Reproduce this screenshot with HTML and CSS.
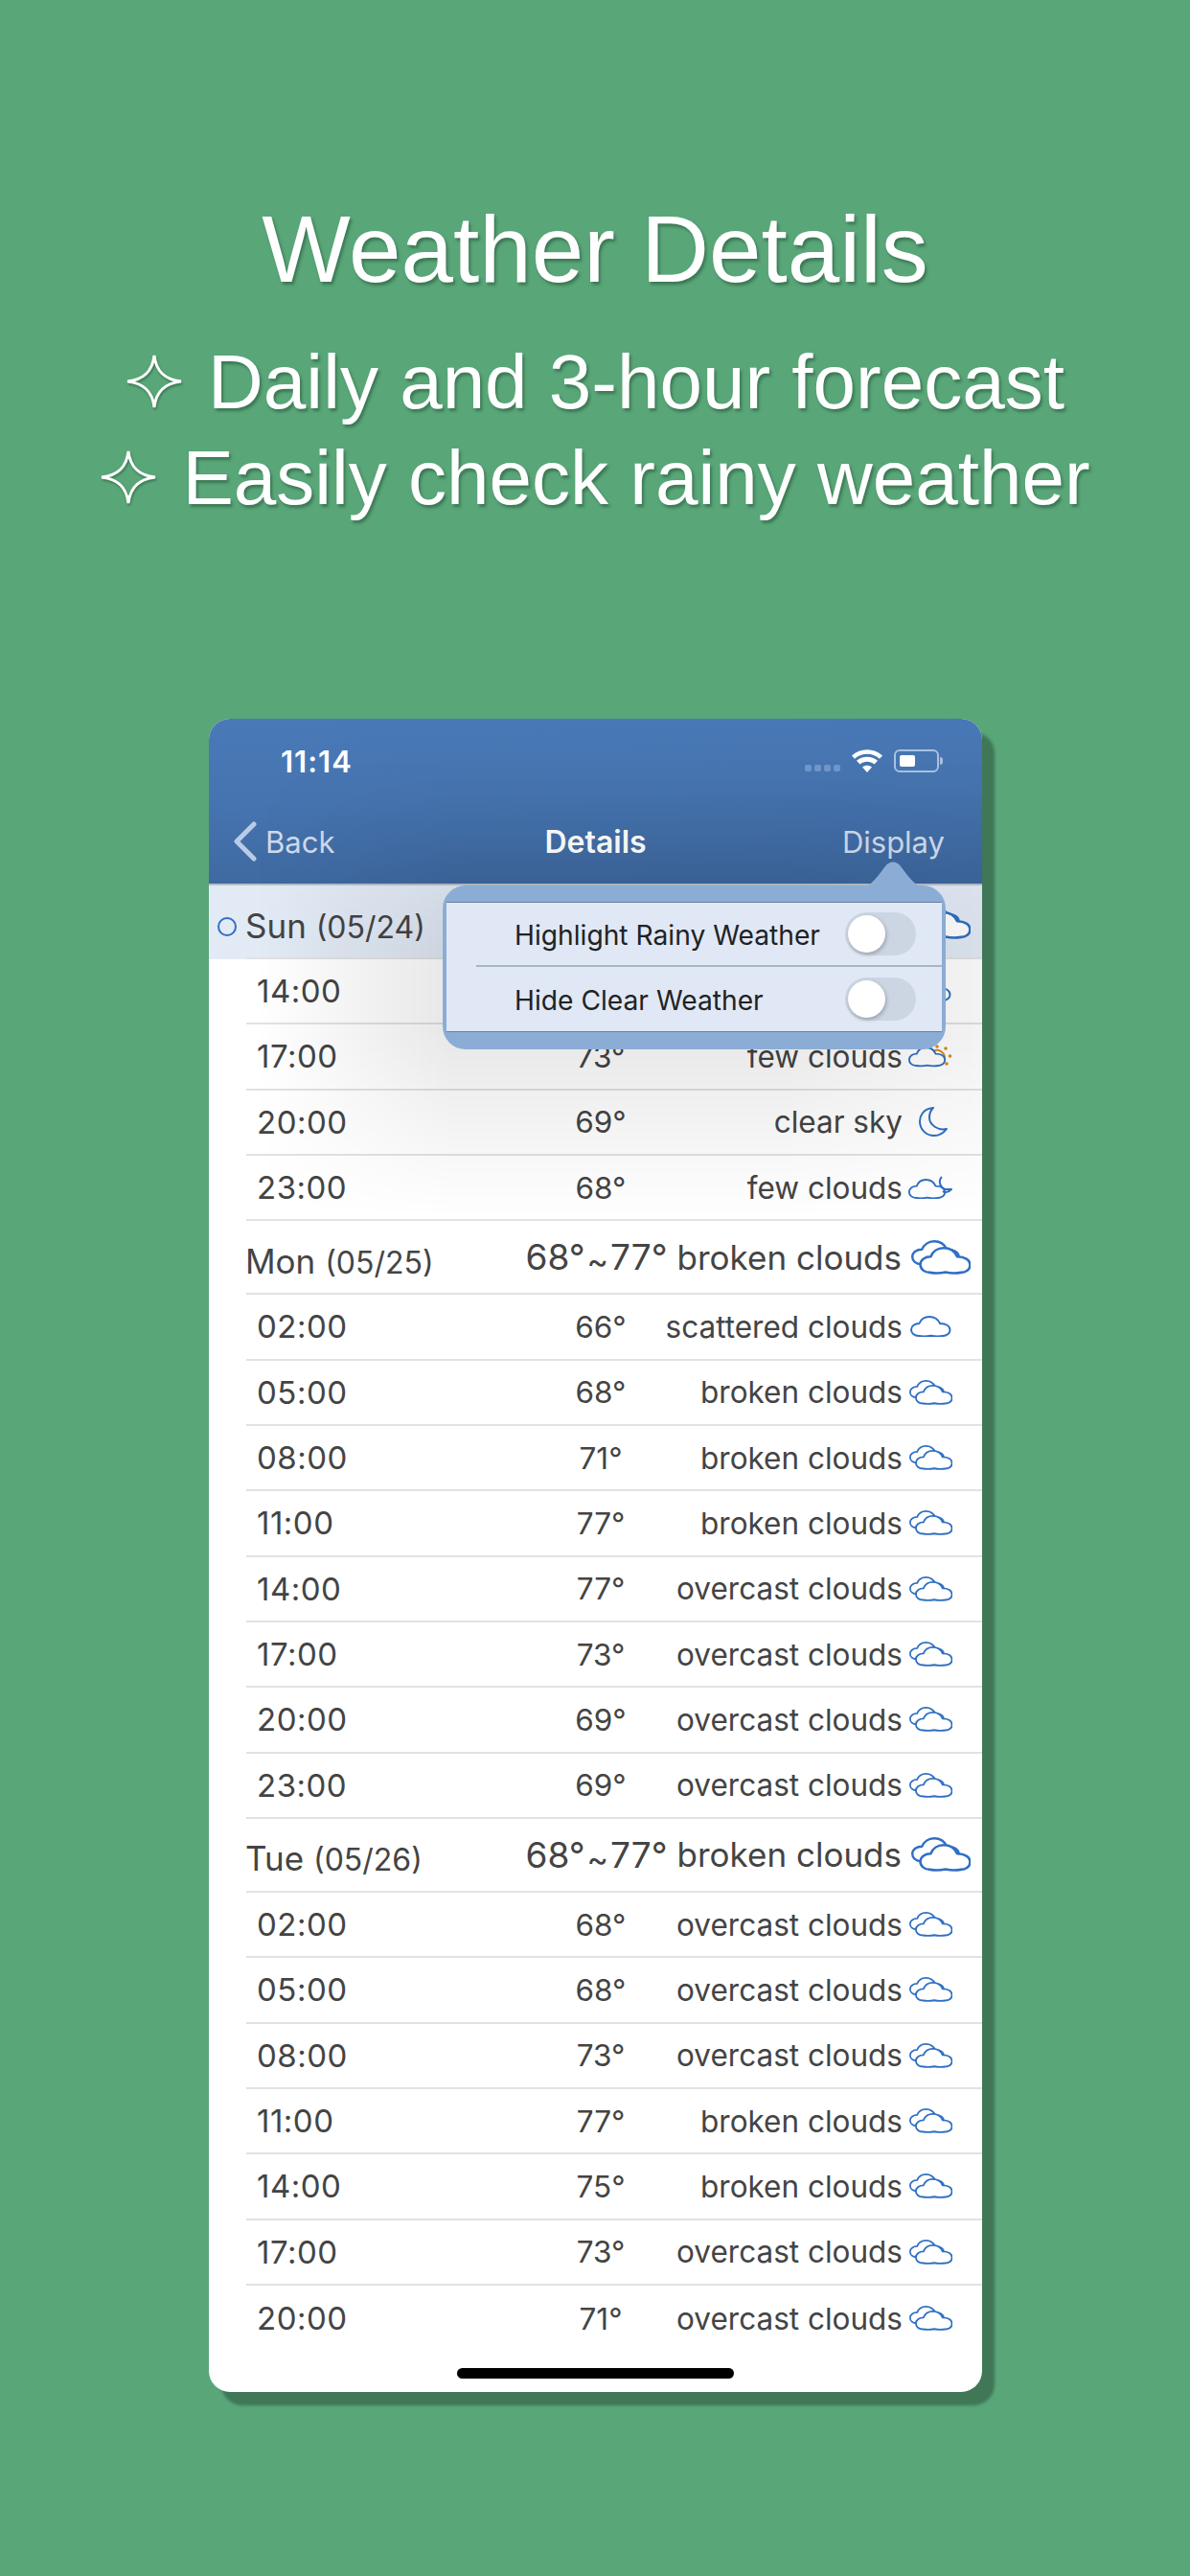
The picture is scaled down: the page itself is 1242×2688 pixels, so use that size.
FILE: index.html
```html
<!DOCTYPE html>
<html lang="en">
<head>
<meta charset="utf-8">
<title>Weather Details</title>
<link rel="stylesheet" href="styles.css">
</head>
<body>
<svg class="defs" width="0" height="0" aria-hidden="true">
  <defs>
    <path id="cloud-path" d="M9 21C4 21 1 18 1 14.5 1 10.5 5 8 9.5 8 11 4 15 1 20 1 25 1 29 3.5 31 8 37 8 41.5 10.5 41.5 15 41.5 18.5 38 21 34 21 30 21.6 26 21.6 21.5 20.7 17 21.6 13 21.6 9 21Z"/>
    <symbol id="scattered" viewBox="0 0 43 22"><use href="#cloud-path" class="ln"/></symbol>
    <symbol id="broken" viewBox="0 0 45 26">
      <use href="#cloud-path" class="ln" transform="translate(0 0) scale(.87 .87)"/>
      <use href="#cloud-path" class="ln fw" transform="translate(6 5) scale(.93 .93)"/>
    </symbol>
    <symbol id="fewsun" viewBox="0 0 46 24">
      <path class="sun" d="M26 7A8 8 0 0 1 38 14"/>
      <g class="rays"><circle cx="30" cy="2" r="1.8"/><circle cx="39" cy="4" r="1.8"/><circle cx="43.500" cy="12" r="1.8"/><circle cx="40" cy="20" r="1.8"/></g>
      <use href="#cloud-path" class="ln" transform="translate(0 2) scale(.92 .95)"/>
    </symbol>
    <symbol id="fewmoon" viewBox="0 0 46 24">
      <path class="ln" d="M35 1C31 5 33 12 38 14L45 14C42 17 38 18 36 16"/>
      <use href="#cloud-path" class="ln" transform="translate(0 3) scale(.92 .95)"/>
    </symbol>
    <symbol id="moon" viewBox="0 0 30 31">
      <path class="ln" d="M15 1C4 2 1 10 1 15 1 24 8 30 16 30 22 30 26 27 29 23 20 25 11 19 11 11 11 7 12 4 15 1Z"/>
    </symbol>
  </defs>
</svg>

<header class="hero">
  <h1 class="hero-title">Weather Details</h1>
  <p class="hero-line">
    <svg class="star" viewBox="0 0 60 58"><path d="M30 2C32 19 41 27 58 29 41 31 32 39 30 56 28 39 19 31 2 29 19 27 28 19 30 2Z"/></svg>
    <span>Daily and 3-hour forecast</span>
  </p>
  <p class="hero-line">
    <svg class="star" viewBox="0 0 60 58"><path d="M30 2C32 19 41 27 58 29 41 31 32 39 30 56 28 39 19 31 2 29 19 27 28 19 30 2Z"/></svg>
    <span>Easily check rainy weather</span>
  </p>
</header>

<main class="phone">
  <div class="topbar">
    <div class="status">
      <span class="clock">11:14</span>
      <div class="status-icons">
        <span class="signal"><i></i><i></i><i></i><i></i></span>
        <svg class="wifi" viewBox="0 0 32 24"><path d="M16 24L11 18.500C14 16 18 16 21 18.500ZM8.500 15.500L5 11.800C11 6.500 21 6.500 27 11.800L23.500 15.500C19 11.800 13 11.800 8.500 15.500ZM3 9.700L0 6.500C9 -2 23 -2 32 6.500L29 9.700C21.500 3 10.500 3 3 9.700Z"/></svg>
        <span class="battery"><i class="battery-level"></i></span>
      </div>
    </div>
    <nav class="nav">
      <span class="back">
        <svg class="chevron" viewBox="0 0 26 42"><path d="M22 3L4 21 22 39"/></svg>
        Back
      </span>
      <strong class="nav-title">Details</strong>
      <span class="display">Display</span>
    </nav>
  </div>

  <section class="list">
    <div class="day today">
      <span class="today-dot"></span>
      <div class="day-inner">
        <span class="date">Sun <small>(05/24)</small></span>
        <span class="ico"><svg class="big"><use href="#broken"/></svg></span>
      </div>
    </div>
    <div class="row"><span class="time">14:00</span><span class="temp"></span><span class="desc"></span><span class="ico"><svg class="s"><use href="#scattered"/></svg></span></div>
    <div class="row"><span class="time">17:00</span><span class="temp">73°</span><span class="desc">few clouds</span><span class="ico"><svg class="f"><use href="#fewsun"/></svg></span></div>
    <div class="row"><span class="time">20:00</span><span class="temp">69°</span><span class="desc">clear sky</span><span class="ico"><svg class="m"><use href="#moon"/></svg></span></div>
    <div class="row"><span class="time">23:00</span><span class="temp">68°</span><span class="desc">few clouds</span><span class="ico"><svg class="f"><use href="#fewmoon"/></svg></span></div>

    <div class="day">
      <div class="day-inner">
        <span class="date">Mon <small>(05/25)</small></span>
        <span class="range">68°<small>~</small>77°</span>
        <span class="desc">broken clouds</span>
        <span class="ico"><svg class="big"><use href="#broken"/></svg></span>
      </div>
    </div>
    <div class="row"><span class="time">02:00</span><span class="temp">66°</span><span class="desc">scattered clouds</span><span class="ico"><svg class="s"><use href="#scattered"/></svg></span></div>
    <div class="row"><span class="time">05:00</span><span class="temp">68°</span><span class="desc">broken clouds</span><span class="ico"><svg class="b"><use href="#broken"/></svg></span></div>
    <div class="row"><span class="time">08:00</span><span class="temp">71°</span><span class="desc">broken clouds</span><span class="ico"><svg class="b"><use href="#broken"/></svg></span></div>
    <div class="row"><span class="time">11:00</span><span class="temp">77°</span><span class="desc">broken clouds</span><span class="ico"><svg class="b"><use href="#broken"/></svg></span></div>
    <div class="row"><span class="time">14:00</span><span class="temp">77°</span><span class="desc">overcast clouds</span><span class="ico"><svg class="b"><use href="#broken"/></svg></span></div>
    <div class="row"><span class="time">17:00</span><span class="temp">73°</span><span class="desc">overcast clouds</span><span class="ico"><svg class="b"><use href="#broken"/></svg></span></div>
    <div class="row"><span class="time">20:00</span><span class="temp">69°</span><span class="desc">overcast clouds</span><span class="ico"><svg class="b"><use href="#broken"/></svg></span></div>
    <div class="row"><span class="time">23:00</span><span class="temp">69°</span><span class="desc">overcast clouds</span><span class="ico"><svg class="b"><use href="#broken"/></svg></span></div>

    <div class="day">
      <div class="day-inner">
        <span class="date">Tue <small>(05/26)</small></span>
        <span class="range">68°<small>~</small>77°</span>
        <span class="desc">broken clouds</span>
        <span class="ico"><svg class="big"><use href="#broken"/></svg></span>
      </div>
    </div>
    <div class="row"><span class="time">02:00</span><span class="temp">68°</span><span class="desc">overcast clouds</span><span class="ico"><svg class="b"><use href="#broken"/></svg></span></div>
    <div class="row"><span class="time">05:00</span><span class="temp">68°</span><span class="desc">overcast clouds</span><span class="ico"><svg class="b"><use href="#broken"/></svg></span></div>
    <div class="row"><span class="time">08:00</span><span class="temp">73°</span><span class="desc">overcast clouds</span><span class="ico"><svg class="b"><use href="#broken"/></svg></span></div>
    <div class="row"><span class="time">11:00</span><span class="temp">77°</span><span class="desc">broken clouds</span><span class="ico"><svg class="b"><use href="#broken"/></svg></span></div>
    <div class="row"><span class="time">14:00</span><span class="temp">75°</span><span class="desc">broken clouds</span><span class="ico"><svg class="b"><use href="#broken"/></svg></span></div>
    <div class="row"><span class="time">17:00</span><span class="temp">73°</span><span class="desc">overcast clouds</span><span class="ico"><svg class="b"><use href="#broken"/></svg></span></div>
    <div class="row last"><span class="time">20:00</span><span class="temp">71°</span><span class="desc">overcast clouds</span><span class="ico"><svg class="b"><use href="#broken"/></svg></span></div>
  </section>

  <div class="home-bar"></div>
  <div class="halo"></div>

  <div class="popover">
    <svg class="pointer" viewBox="0 0 64 28"><path d="M0 28C8 26 12 22 24 6 28 0 36 0 40 6 52 22 56 26 64 28Z"/></svg>
    <div class="pop-body">
      <div class="pop-row">
        <span class="pop-label">Highlight Rainy Weather</span>
        <span class="toggle"><i class="knob"></i></span>
      </div>
      <div class="pop-row">
        <span class="pop-label">Hide Clear Weather</span>
        <span class="toggle"><i class="knob"></i></span>
      </div>
    </div>
  </div>
</main>
</body>
</html>
```

FILE: styles.css
```css
* { box-sizing: border-box; }

html, body { margin: 0; padding: 0; }

body {
  width: 1242px;
  height: 2688px;
  background: #59a678;
  font-family: Inter, "Liberation Sans", sans-serif;
  overflow: hidden;
}

.defs { position: absolute; }

/* hero */
.hero {
  height: 750px;
  padding-top: 202px;
  display: flex;
  flex-direction: column;
  align-items: center;
  color: #fff;
  font-family: "Liberation Sans", Arial, sans-serif;
  text-shadow: 2px 3px 3px rgba(40, 90, 60, .6);
}

.hero-title {
  margin: 0 0 31px;
  font-size: 98px;
  line-height: 116px;
  font-weight: 400;
}

.hero-line {
  margin: 0;
  display: flex;
  align-items: center;
  gap: 26px;
  font-size: 80px;
  line-height: 100px;
  height: 100px;
}

.star {
  width: 60px;
  height: 58px;
  margin-top: -2px;
  fill: none;
  stroke: #fff;
  stroke-width: 3;
  filter: drop-shadow(1px 2px 1px rgba(40, 90, 60, .6));
}

/* phone card */
.phone {
  position: relative;
  width: 807px;
  height: 1746px;
  margin-left: 218px;
  background: #fff;
  border-radius: 22px;
  box-shadow: 13px 14px 3px #3f7757;
}

.topbar {
  height: 174px;
  border-radius: 22px 22px 0 0;
  background: linear-gradient(178deg, #4979b8 0%, #4674b0 45%, #3c669c 100%);
  border-bottom: 2px solid #b9c0ca;
  color: #fff;
}

.status {
  height: 88px;
  padding: 0 45px 0 75px;
  display: flex;
  justify-content: space-between;
  align-items: center;
}

.clock {
  font-size: 31px;
  font-weight: 600;
  letter-spacing: 1px;
}

.status-icons {
  display: flex;
  align-items: center;
}

.signal {
  display: flex;
  gap: 3px;
  margin: 14px 12px 0 0;
}

.signal i {
  width: 7px;
  height: 7px;
  border-radius: 2px;
  background: #7097ca;
}

.wifi {
  width: 32px;
  height: 24px;
  fill: #fff;
  margin-right: 12px;
}

.battery {
  position: relative;
  width: 47px;
  height: 24px;
  padding: 4px;
  border: 2px solid #a9c1e0;
  border-radius: 6px;
}

.battery::after {
  content: "";
  position: absolute;
  right: -6px;
  top: 6px;
  width: 3px;
  height: 8px;
  border-radius: 0 3px 3px 0;
  background: #a9c1e0;
}

.battery-level {
  display: block;
  width: 16px;
  height: 100%;
  border-radius: 2px;
  background: #fff;
}

.nav {
  height: 84px;
  padding: 0 39px 4px 39px;
  display: grid;
  grid-template-columns: 1fr auto 1fr;
  align-items: center;
  font-size: 31px;
}

.back {
  display: flex;
  align-items: center;
  gap: 8px;
  margin-left: -14px;
  color: #cfdbec;
}

.chevron {
  width: 26px;
  height: 42px;
  fill: none;
  stroke: #b9cce6;
  stroke-width: 5;
  stroke-linecap: round;
  stroke-linejoin: round;
}

.nav-title {
  font-weight: 600;
  font-size: 32px;
}

.display {
  justify-self: end;
  color: #cfdbec;
}

/* list */
.list {
  color: #444;
  font-size: 31.5px;
}

.row {
  height: 68.33px;
  margin-left: 39px;
  padding-left: 10px;
  display: grid;
  grid-template-columns: 310px 100px 265px 77px;
  align-items: center;
  border-bottom: 2px solid #e2e2e2;
}

.row.last { border-bottom: 0; }

.time {
  margin-left: 1px;
  font-size: 33px;
  letter-spacing: .5px;
}

.temp { text-align: center; }

.row .desc { text-align: right; }

.ico {
  width: 46px;
  margin-left: 6px;
  display: flex;
  justify-content: center;
  align-items: center;
}

.ico svg { flex: none; display: block; }

.ico .s { width: 43px; height: 22px; }
.ico .b { width: 45px; height: 26px; }
.ico .f { width: 46px; height: 24px; }
.ico .m { width: 30px; height: 31px; margin-left: 6px; }

.ln {
  fill: none;
  stroke: #2f6fc4;
  stroke-width: 2;
  stroke-linejoin: round;
}

.fw { fill: #fff; }

.sun {
  fill: none;
  stroke: #d98a1d;
  stroke-width: 2;
}

.rays { fill: #d98a1d; }

.day {
  height: 77px;
  padding-left: 39px;
}

.day-inner {
  height: 100%;
  display: flex;
  align-items: center;
  border-bottom: 2px solid #e2e2e2;
}

.today {
  position: relative;
  background: #e2eaf6;
}

.today-dot {
  position: absolute;
  left: 9px;
  top: 33px;
  width: 20px;
  height: 20px;
  border: 2px solid #2f6fc4;
  border-radius: 50%;
}

.date {
  flex: 1;
  margin-left: -1px;
  padding-top: 8px;
  font-size: 35px;
}

.date small { font-size: 32px; }

.range {
  margin-right: 10px;
  font-size: 37px;
  white-space: nowrap;
}

.range small {
  display: inline-block;
  margin: 0 2px;
  font-size: 34px;
  transform: translateY(3px);
}

.day .desc { font-size: 35px; }

.day .ico {
  width: 77px;
  margin-left: 7px;
  justify-content: flex-start;
}

.day .ico .big {
  width: 62px;
  height: 36px;
  margin-left: 3px;
}

.home-bar {
  position: absolute;
  left: 259px;
  bottom: 14px;
  width: 289px;
  height: 11px;
  border-radius: 6px;
  background: #000;
}

.halo {
  position: absolute;
  left: 0;
  top: 40px;
  width: 807px;
  height: 480px;
  background: linear-gradient(90deg, rgba(0, 0, 0, 0) 50px, rgba(0, 0, 0, .09) 250px, rgba(0, 0, 0, .09) 600px, rgba(0, 0, 0, .05) 807px);
  -webkit-mask-image: linear-gradient(180deg, transparent 0, #000 42%, #000 60%, transparent 100%);
  mask-image: linear-gradient(180deg, transparent 0, #000 42%, #000 60%, transparent 100%);
  pointer-events: none;
}

/* popover */
.popover {
  position: absolute;
  left: 244px;
  top: 174px;
  width: 525px;
  height: 171px;
  padding: 17px 4px 18px;
  border-radius: 24px;
  background: #8badd5;
}

.pointer {
  position: absolute;
  left: 438px;
  top: -26px;
  width: 64px;
  height: 28px;
  fill: #8badd5;
}

.pop-body {
  height: 136px;
  background: #e0e8f5;
  border-top: 1px solid #6c7f99;
  border-bottom: 1px solid #6c7f99;
}

.pop-row {
  height: 67px;
  margin-left: 31px;
  padding: 0 27px 0 40px;
  display: flex;
  justify-content: space-between;
  align-items: center;
  color: #222;
  font-size: 28.2px;
}

.pop-row:first-child { border-bottom: 2px solid #a9b3c2; }

.pop-label { padding-top: 2px; }

.toggle {
  width: 74px;
  height: 45px;
  padding: 3px;
  border-radius: 23px;
  background: #ccd5e2;
}

.knob {
  display: block;
  width: 39px;
  height: 39px;
  border-radius: 50%;
  background: #fff;
  box-shadow: 1px 2px 4px rgba(0, 0, 0, .25);
}
```
